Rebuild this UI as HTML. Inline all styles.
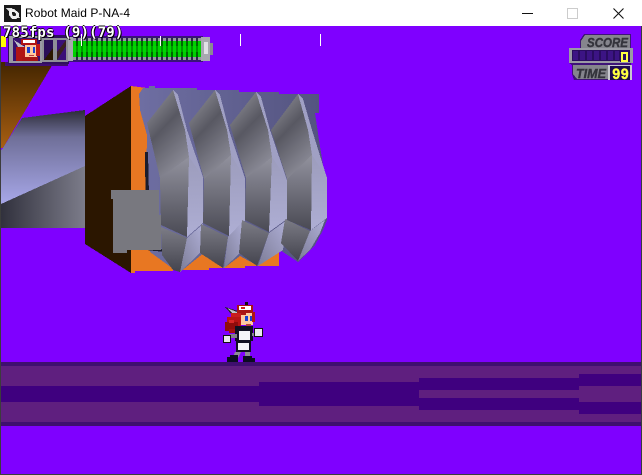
<!DOCTYPE html>
<html><head><meta charset="utf-8">
<style>
html,body{margin:0;padding:0;background:#7f00ff}
#w{position:relative;width:642px;height:475px;overflow:hidden;background:#7f00ff}
svg{position:absolute;left:0;top:0}
.t{position:absolute;left:25px;top:6px;font:12px/14px "Liberation Sans",sans-serif;letter-spacing:.06px;color:#000;white-space:nowrap}
.f{position:absolute;left:3px;top:25px;font:bold 14px/16px "DejaVu Sans Mono","Liberation Mono",monospace;letter-spacing:.18px;color:#fff;white-space:pre;text-shadow:1px 1px 0 #000,-1px 0 0 #111,0 -1px 0 #111}
</style></head><body><div id="w">
<svg width="642" height="475" viewBox="0 0 642 475" shape-rendering="crispEdges">
<defs>
<linearGradient id="arm" gradientUnits="userSpaceOnUse" x1="0" y1="62" x2="0" y2="148"><stop offset="0" stop-color="#432500"/><stop offset="1" stop-color="#a85f12"/></linearGradient>
<linearGradient id="cyl" gradientUnits="userSpaceOnUse" x1="0" y1="110" x2="0" y2="200"><stop offset="0" stop-color="#2c2c38"/><stop offset=".3" stop-color="#6f6f98"/><stop offset="1" stop-color="#a4a4e4"/></linearGradient>
<linearGradient id="cyl2" gradientUnits="userSpaceOnUse" x1="0" y1="0" x2="85" y2="0"><stop offset="0" stop-color="#30303c"/><stop offset="1" stop-color="#7c7c8a"/></linearGradient>
<linearGradient id="back" gradientUnits="userSpaceOnUse" x1="140" y1="0" x2="320" y2="0"><stop offset="0" stop-color="#6e6ea2"/><stop offset="1" stop-color="#545480"/></linearGradient>
<linearGradient id="up" x1=".25" y1="0" x2=".75" y2="1"><stop offset="0" stop-color="#8c8c94"/><stop offset=".4" stop-color="#585862"/><stop offset="1" stop-color="#92929e"/></linearGradient>
<linearGradient id="mid" x1="0" y1="0" x2="0" y2="1"><stop offset="0" stop-color="#92929e"/><stop offset="1" stop-color="#4a4a54"/></linearGradient>
<linearGradient id="low" x1="0" y1="0" x2="0" y2="1"><stop offset="0" stop-color="#7c7c86"/><stop offset="1" stop-color="#44444e"/></linearGradient>
<linearGradient id="lit" x1="0" y1="0" x2="0" y2="1"><stop offset="0" stop-color="#9c9cbc"/><stop offset="1" stop-color="#aeaed4"/></linearGradient>
<linearGradient id="lit2" x1="0" y1="1" x2="1" y2="0"><stop offset="0" stop-color="#7c7c96"/><stop offset="1" stop-color="#b0b0d8"/></linearGradient>
<pattern id="gs" patternUnits="userSpaceOnUse" x="73" y="0" width="5" height="10"><rect width="3" height="10" fill="#00d000"/><rect x="3" width="2" height="10" fill="#006400"/></pattern>
<pattern id="ge" patternUnits="userSpaceOnUse" x="73" y="0" width="5" height="10"><rect width="3" height="10" fill="#98989f"/><rect x="3" width="2" height="10" fill="#2f2050"/></pattern>
</defs>

<!-- titlebar -->
<rect width="642" height="26" fill="#fff"/>
<rect x="4" y="5" width="17" height="17" fill="#1a1a1a"/>
<path d="M6 8h6l8 10h-5z" fill="#ddd"/><path d="M10 9h4l5 4v3l-3 3h-4l-3-4v-3z" fill="#eee"/><path d="M12 12h2l2 2v1l-1 1h-2l-1-2z" fill="#1a1a1a"/>
<rect x="522" y="13" width="11" height="1" fill="#111"/>
<rect x="567.5" y="8.5" width="10" height="10" fill="none" stroke="#ccc"/>
<path d="M613.5 8.5l10 10M623.5 8.5l-10 10" stroke="#111" stroke-width="1.1" fill="none" shape-rendering="auto"/>

<!-- arm -->
<polygon points="1,62 54,62 3,148 1,148" fill="url(#arm)"/>
<polygon points="3,148 22,118 85,110 85,166 1,204 1,150" fill="url(#cyl)"/>
<polygon points="1,204 85,166 85,228 1,228" fill="url(#cyl2)"/>
<polygon points="85,116 131,86 131,273 85,244" fill="#2b1600"/>

<!-- orange -->
<polygon points="131,86 147,88 148,250 279,250 279,266 245,266 245,268 209,268 209,270 173,270 173,271 135,271 135,273 131,273" fill="#e87722"/>

<!-- fist backing -->
<polygon points="139,94 143,88 149,88 149,86 155,86 155,88 197,88 197,90 239,90 239,92 279,92 279,94 319,94 319,113 315,113 319,140 323,165 327,180 327,220 323,230 315,245 305,255 298,262 280,250 258,266 240,256 224,268 205,252 180,272 172,268 150,252 146,190 147,135 140,110" fill="url(#back)"/>
<polygon points="145,152 148,152 150,240 165,252 146,250" fill="#1c1c2c"/>

<!-- tooth 1 -->
<polygon points="173,90 185,130 189,157 160,178 147,123" fill="url(#up)"/>
<polygon points="173,90 178,95 187,130 203,177 189,157 185,130" fill="#a0a0c4"/>
<polygon points="160,178 189,157 187,237 161,225" fill="url(#mid)"/>
<polygon points="189,157 203,177 203,223 187,237" fill="url(#lit)"/>
<polygon points="161,227 187,238 180,272 173,270 162,255" fill="url(#low)"/>
<polygon points="187,238 203,224 200,253 180,272" fill="url(#lit2)"/>
<!-- tooth 2 -->
<polygon points="215,90 227,130 231,155 204,179 189,123" fill="url(#up)"/>
<polygon points="215,90 220,95 229,130 245,178 231,155 227,130" fill="#a0a0c4"/>
<polygon points="204,179 231,155 229,236 203,223" fill="url(#mid)"/>
<polygon points="231,155 245,178 245,221 229,236" fill="url(#lit)"/>
<polygon points="201,224 228,237 223,268 200,253" fill="url(#low)"/>
<polygon points="228,237 244,220 240,253 224,268" fill="url(#lit2)"/>
<!-- tooth 3 -->
<polygon points="256,92 268,130 272,157 246,178 230,125" fill="url(#up)"/>
<polygon points="256,92 261,97 270,130 287,180 272,157 268,130" fill="#a0a0c4"/>
<polygon points="246,178 272,157 269,232 245,220" fill="url(#mid)"/>
<polygon points="272,157 287,180 287,219 269,232" fill="url(#lit)"/>
<polygon points="242,220 269,233 257,266 239,253" fill="url(#low)"/>
<polygon points="269,233 287,220 283,250 258,266" fill="url(#lit2)"/>
<!-- tooth 4 -->
<polygon points="298,94 308,130 312,155 287,179 271,130" fill="url(#up)"/>
<polygon points="298,94 303,99 312,130 327,178 312,155 308,130" fill="#a0a0c4"/>
<polygon points="287,179 312,155 311,230 287,220" fill="url(#mid)"/>
<polygon points="312,155 327,178 327,218 311,230" fill="url(#lit)"/>
<polygon points="285,219 310,231 298,261 281,243" fill="url(#low)"/>
<polygon points="310,231 325,220 320,233 310,250 298,261" fill="url(#lit2)"/>

<!-- gray block -->
<polygon points="111,190 159,190 159,215 161,215 161,250 127,250 127,253 113,253 113,199 111,199" fill="#78787f"/>

<!-- floor -->
<rect x="0" y="362" width="642" height="64" fill="#3f0f6f"/>
<rect x="0" y="366" width="642" height="56" fill="#5f1f7f"/>
<rect x="0" y="386" width="259" height="16" fill="#3f007f"/>
<rect x="259" y="382" width="160" height="24" fill="#3f007f"/>
<rect x="419" y="378" width="160" height="12" fill="#3f007f"/>
<rect x="419" y="398" width="160" height="12" fill="#3f007f"/>
<rect x="579" y="374" width="63" height="12" fill="#3f007f"/>
<rect x="579" y="402" width="63" height="12" fill="#3f007f"/>

<!-- sprite -->
<g>
<rect x="245" y="302" width="3" height="3" fill="#111"/>
<polygon points="225,307 238,311 238,318 233,316" fill="#222"/>
<polygon points="227,308 237,312 237,316 233,314" fill="#c0c0c8"/>
<rect x="237" y="305" width="16" height="8" fill="#a81414"/>
<rect x="239" y="306" width="12" height="4" fill="#fff"/>
<rect x="241" y="307" width="4" height="2" fill="#d02020"/>
<rect x="231" y="313" width="10" height="6" fill="#c81c1c"/>
<rect x="227" y="317" width="14" height="10" fill="#b81414"/>
<rect x="225" y="322" width="13" height="9" fill="#900c0c"/>
<rect x="229" y="329" width="7" height="4" fill="#a01010"/>
<rect x="229" y="320" width="5" height="3" fill="#d82828"/>
<rect x="241" y="313" width="12" height="12" fill="#ffc8a0"/>
<rect x="252" y="312" width="3" height="10" fill="#b01414"/>
<rect x="241" y="313" width="5" height="2" fill="#b01414"/>
<rect x="245" y="316" width="3" height="5" fill="#1840d0"/>
<rect x="250" y="316" width="2" height="5" fill="#1840d0"/>
<rect x="246" y="324" width="5" height="2" fill="#b84040"/>
<rect x="235" y="326" width="18" height="15" fill="#111122"/>
<rect x="239" y="331" width="11" height="9" fill="#f4f4f8"/>
<rect x="252" y="333" width="5" height="3" fill="#888890"/>
<rect x="254" y="328" width="9" height="9" fill="#111"/>
<rect x="255" y="329" width="7" height="7" fill="#e8e8ee"/>
<rect x="230" y="334" width="7" height="4" fill="#808088"/>
<rect x="223" y="335" width="8" height="8" fill="#111"/>
<rect x="224" y="336" width="6" height="6" fill="#e8e8ee"/>
<rect x="236" y="341" width="15" height="11" fill="#111122"/>
<rect x="238" y="343" width="11" height="7" fill="#f4f4f8"/>
<polygon points="235,352 241,352 238,358 233,358" fill="#8c8c94"/>
<rect x="245" y="352" width="5" height="6" fill="#8c8c94"/>
<rect x="227" y="357" width="11" height="5" fill="#0c0c22"/>
<rect x="230" y="355" width="8" height="3" fill="#0c0c22"/>
<rect x="243" y="356" width="9" height="3" fill="#0c0c22"/>
<rect x="243" y="358" width="12" height="4" fill="#0c0c22"/>
</g>

<!-- health HUD -->
<rect x="5" y="62" width="63" height="4" fill="#3f0f6f"/>
<rect x="8" y="35" width="61" height="29" fill="#301060"/>
<rect x="9" y="36" width="33" height="27" fill="#9a9aa4"/>
<rect x="13" y="38" width="27" height="23" fill="#3a1070"/>
<rect x="42" y="38" width="26" height="24" fill="#8f8f98"/>
<rect x="44" y="40" width="9" height="20" fill="#2a0d58"/>
<rect x="57" y="40" width="9" height="20" fill="#3a1078"/>
<polygon points="44,60 53,48 53,60" fill="#2b1600"/>
<polygon points="57,52 66,40 66,46 57,60" fill="#3a2020"/>
<!-- portrait -->
<polygon points="14,40 25,47 24,53 20,50" fill="#c0c0c8"/>
<rect x="16" y="47" width="9" height="14" fill="#b01414"/>
<rect x="21" y="39" width="16" height="6" fill="#b01414"/>
<rect x="23" y="40" width="12" height="3" fill="#fff"/>
<rect x="25" y="45" width="12" height="12" fill="#ffc8a0"/>
<rect x="27" y="47" width="3" height="6" fill="#1840d0"/>
<rect x="33" y="47" width="2" height="6" fill="#1840d0"/>
<rect x="36" y="44" width="4" height="12" fill="#c01818"/>
<rect x="29" y="55" width="5" height="1" fill="#b84040"/>
<rect x="22" y="57" width="16" height="4" fill="#a81414"/>
<rect x="1" y="36" width="5" height="11" fill="#ffff00"/>
<!-- bar -->
<rect x="68" y="36" width="135" height="26" fill="#3a1478"/>
<rect x="68" y="37" width="5" height="24" fill="#a8a8b0"/>
<rect x="73" y="38" width="130" height="22" fill="url(#ge)"/>
<rect x="73" y="41" width="130" height="16" fill="url(#gs)"/>
<rect x="73" y="46" width="130" height="6" fill="#00e000" opacity=".4"/>
<rect x="201" y="37" width="9" height="24" fill="#a8a8b0"/>
<rect x="204" y="42" width="4" height="12" fill="#e0e0e6"/>
<rect x="210" y="43" width="3" height="12" fill="#8a8a92"/>
<rect x="81" y="34" width="1" height="12" fill="#fff"/>
<rect x="160" y="36" width="1" height="10" fill="#fff"/>
<rect x="240" y="34" width="1" height="12" fill="#fff"/>
<rect x="320" y="34" width="1" height="12" fill="#fff"/>

<!-- score HUD -->
<polygon points="584,34 631,34 631,48 633,48 633,63 631,63 631,80 574,80 572,74 572,65 569,63 569,48 580,48 580,40" fill="#3f1478"/>
<polygon points="585,35 630,35 630,48 581,48 581,41" fill="#85858d"/>
<rect x="569" y="48" width="64" height="15" fill="#9a9aa4"/>
<rect x="572" y="50" width="48" height="11" fill="#2a0c60"/>
<rect x="620" y="50" width="10" height="12" fill="#2a0c60"/>
<g fill="#3c1484"><rect x="573" y="51" width="5" height="9"/><rect x="580" y="51" width="5" height="9"/><rect x="587" y="51" width="5" height="9"/><rect x="594" y="51" width="5" height="9"/><rect x="601" y="51" width="5" height="9"/><rect x="608" y="51" width="5" height="9"/><rect x="615" y="51" width="4" height="9"/></g>
<rect x="622" y="53" width="5" height="8" fill="none" stroke="#ffff40" stroke-width="2"/>
<polygon points="573,65 608,65 608,79 577,79 573,74" fill="#85858d"/>
<rect x="608" y="65" width="24" height="15" fill="#c8c8d0"/>
<rect x="610" y="66" width="20" height="14" fill="#1e0a50"/>
<text x="587" y="47" font-family="'Liberation Sans',sans-serif" font-size="13" font-weight="bold" font-style="italic" fill="#34343c" stroke="#34343c" stroke-width=".4" textLength="41" lengthAdjust="spacingAndGlyphs">SCORE</text>
<text x="576" y="78" font-family="'Liberation Sans',sans-serif" font-size="13" font-weight="bold" font-style="italic" fill="#34343c" stroke="#34343c" stroke-width=".4" textLength="30" lengthAdjust="spacingAndGlyphs">TIME</text>
<text x="612" y="79" font-family="'Liberation Mono',monospace" font-size="16" font-weight="bold" fill="#ffff40" stroke="#ffff40" stroke-width=".4" textLength="17" lengthAdjust="spacingAndGlyphs">99</text>

<!-- window borders -->
<rect x="0" y="26" width="1" height="449" fill="#3c3c3c"/>
<rect x="641" y="26" width="1" height="449" fill="#3c3c3c"/>
<rect x="0" y="474" width="642" height="1" fill="#3c3c3c"/>
</svg>
<div class="t">Robot Maid P-NA-4</div>
<div class="f">785fps (9)(79)</div>
</div></body></html>
